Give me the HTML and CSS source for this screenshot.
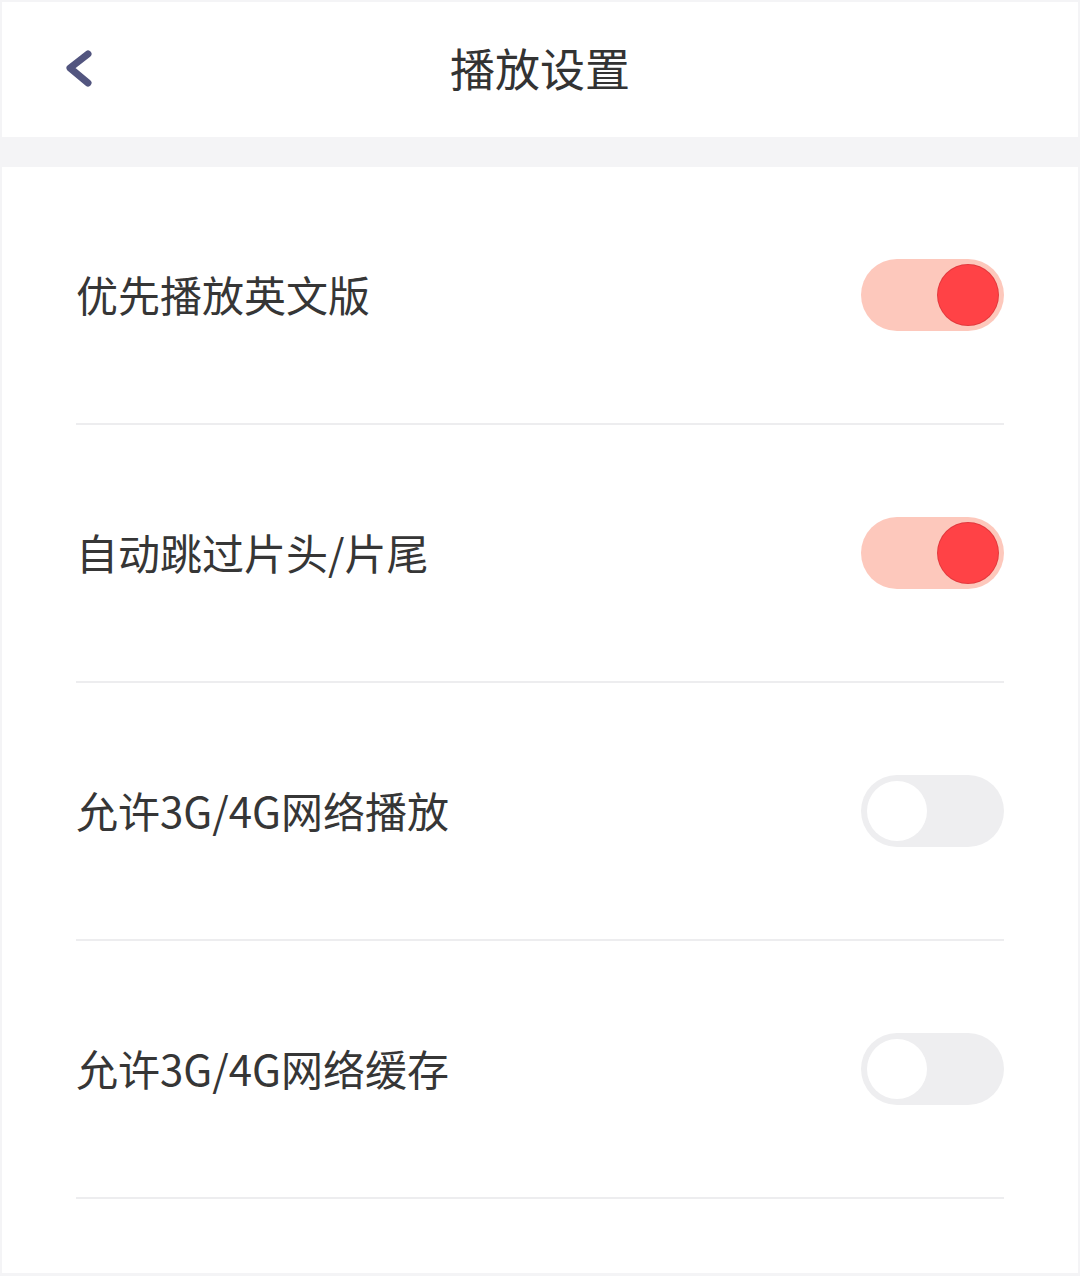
FILE: index.html
```html
<!DOCTYPE html>
<html lang="zh-CN">
<head>
    <meta charset="UTF-8">
    <meta name="viewport" content="width=device-width, initial-scale=1.0">
    <title>播放设置</title>
    <link rel="stylesheet" href="styles.css">
</head>
<body>

<div class="page">
    <div class="header">
        <div class="back">
            <svg width="36" height="44" viewBox="0 0 36 44">
                <path d="M26 7 L8 21 L26 36" fill="none" stroke="#52557f" stroke-width="7" stroke-linecap="round" stroke-linejoin="round"/>
            </svg>
        </div>
        <h2 class="title">播放设置</h2>
        <div></div>
    </div>

    <div class="list">
        <div class="row">
            <span class="label">优先播放英文版</span>
            <div class="switch on"><span class="knob"></span></div>
        </div>
        <div class="row">
            <span class="label">自动跳过片头/片尾</span>
            <div class="switch on"><span class="knob"></span></div>
        </div>
        <div class="row">
            <span class="label">允许3G/4G网络播放</span>
            <div class="switch"><span class="knob"></span></div>
        </div>
        <div class="row">
            <span class="label">允许3G/4G网络缓存</span>
            <div class="switch"><span class="knob"></span></div>
        </div>
    </div>
</div>

</body>
</html>
```

FILE: styles.css
```css
body {
    margin: 0;
    background-color: #f4f4f6;
    font-family: "Noto Sans CJK SC", "Noto Sans", sans-serif;
    color: #333;
}

.page {
    padding: 2px 2px 3px 2px;
    height: 1276px;
    box-sizing: border-box;
    display: flex;
    flex-direction: column;
}

.header {
    height: 135px;
    background-color: #fff;
    display: grid;
    grid-template-columns: 1fr auto 1fr;
    align-items: center;
}

.back {
    padding-left: 60px;
    display: flex;
    align-items: center;
    margin-top: -2px;
}

.title {
    margin: 0;
    padding-bottom: 4px;
    font-size: 45px;
    font-weight: normal;
    color: #333;
}

.list {
    margin-top: 30px;
    background-color: #fff;
    flex-grow: 1;
    padding: 0 74px;
}

.row {
    height: 256px;
    border-bottom: 2px solid #ededef;
    display: flex;
    align-items: center;
    justify-content: space-between;
}

.label {
    font-size: 42px;
    color: #363636;
    padding-bottom: 4px;
}

.switch {
    width: 143px;
    height: 72px;
    border-radius: 36px;
    background-color: #eeeef0;
    display: flex;
    align-items: center;
    padding: 0 6px;
    box-sizing: border-box;
}

.knob {
    width: 60px;
    height: 60px;
    border-radius: 50%;
    background-color: #fff;
}

.switch.on {
    background-color: #fdc8bc;
    justify-content: flex-end;
}

.switch.on .knob {
    background-color: #ff4246;
    box-shadow: 0 0 0 1px #e2393d;
}
```
